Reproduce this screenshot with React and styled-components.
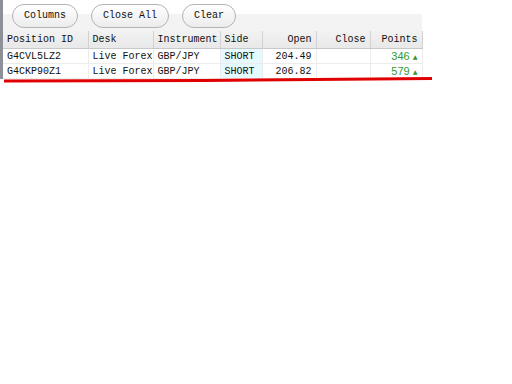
import React from "react";
import styled, { createGlobalStyle } from "styled-components";

const Global = createGlobalStyle`
  body {
    margin: 0;
    background: #fff;
    font-family: "Liberation Mono", "DejaVu Sans Mono", monospace;
  }
`;

const Page = styled.div`
  position: relative;
  width: 512px;
  height: 384px;
`;

const Panel = styled.div`
  width: 419px;
  border-left: 3px solid #8d9197;
`;

const Toolbar = styled.div`
  display: flex;
  align-items: center;
  gap: 13px;
  height: 31px;
  padding-left: 9px;
  box-sizing: border-box;
  background: linear-gradient(#fff 44%, #f3f3f3 44%);
`;

const Button = styled.button`
  height: 24px;
  padding: 0 11px;
  border: 1px solid #b4b4b4;
  border-radius: 12px;
  background: linear-gradient(#ffffff, #ececec);
  font-family: "Liberation Mono", monospace;
  font-size: 10px;
  color: #111;
`;

const Table = styled.table`
  border-collapse: collapse;
  table-layout: fixed;
  width: 419px;
  font-size: 10px;
`;

const Head = styled.th`
  height: 17px;
  padding: 0 4px;
  font-weight: normal;
  text-align: ${(p) => (p.$right ? "right" : "left")};
  background: linear-gradient(#f2f2f2, #e8e8e8);
  border-right: 1px solid #d2d2d2;
  border-bottom: 1px solid #c8c8c8;
  color: #111;
  white-space: nowrap;
  overflow: hidden;
`;

const Cell = styled.td`
  height: 14px;
  padding: 0 4px;
  text-align: ${(p) => (p.$right ? "right" : "left")};
  background: ${(p) => (p.$tint ? "#e4fafe" : "#fff")};
  border-right: 1px solid #ececec;
  border-bottom: 1px solid #ececec;
  color: #111;
  white-space: nowrap;
  overflow: hidden;
`;

const Points = styled.span`
  font-family: "Liberation Sans", Arial, sans-serif;
  font-size: 11px;
  color: #2f9b2f;
`;

const Arrow = styled.span`
  font-size: 8px;
  margin-left: 3px;
  color: #2f9b2f;
`;

const Mark = styled.svg`
  position: absolute;
  left: 4px;
  top: 76px;
`;

const cols = [
  { key: "id", label: "Position ID", w: 85 },
  { key: "desk", label: "Desk", w: 65 },
  { key: "inst", label: "Instrument", w: 67 },
  { key: "side", label: "Side", w: 42 },
  { key: "open", label: "Open", w: 54, right: true },
  { key: "close", label: "Close", w: 54, right: true },
  { key: "points", label: "Points", w: 52, right: true },
];

const rows = [
  { id: "G4CVL5LZ2", desk: "Live Forex", inst: "GBP/JPY", side: "SHORT", open: "204.49", close: "", points: "346" },
  { id: "G4CKP90Z1", desk: "Live Forex", inst: "GBP/JPY", side: "SHORT", open: "206.82", close: "", points: "579" },
];

export default function App() {
  return (
    <Page>
      <Global />
      <Panel>
        <Toolbar>
          <Button>Columns</Button>
          <Button>Close All</Button>
          <Button>Clear</Button>
        </Toolbar>
        <Table>
          <colgroup>
            {cols.map((c) => (
              <col key={c.key} style={{ width: c.w }} />
            ))}
          </colgroup>
          <thead>
            <tr>
              {cols.map((c) => (
                <Head key={c.key} $right={c.right}>
                  {c.label}
                </Head>
              ))}
            </tr>
          </thead>
          <tbody>
            {rows.map((r) => (
              <tr key={r.id}>
                {cols.map((c) => (
                  <Cell key={c.key} $right={c.right} $tint={c.key === "side"}>
                    {c.key === "points" ? (
                      <>
                        <Points>{r.points}</Points>
                        <Arrow>▲</Arrow>
                      </>
                    ) : (
                      r[c.key]
                    )}
                  </Cell>
                ))}
              </tr>
            ))}
          </tbody>
        </Table>
      </Panel>
      <Mark width="430" height="8">
        <path d="M0 5 L200 4.5 L428 2.5" stroke="#e00000" strokeWidth="3" fill="none" />
      </Mark>
    </Page>
  );
}
